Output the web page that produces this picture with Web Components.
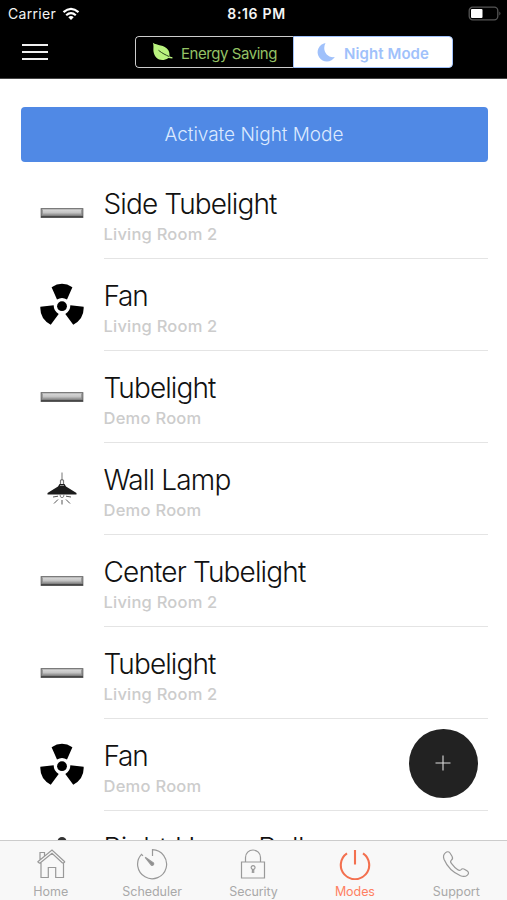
<!DOCTYPE html>
<html lang="en">
<head>
<meta charset="utf-8">
<title>Modes</title>
<style>
html,body{margin:0;height:100%;overflow:hidden;background:#fff;font-family:Inter,"Liberation Sans",sans-serif}
</style>
</head>
<body>
<modes-app></modes-app>
<script>
const svg = (w, h, body) => `<svg width="${w}" height="${h}" viewBox="0 0 ${w} ${h}" fill="none">${body}</svg>`;
const ICONS = {
  tube: svg(44, 44, `<defs><linearGradient id="t" x2="0" y2="1"><stop stop-color="#ddd"/><stop offset=".45" stop-color="#c4c4c4"/><stop offset=".75" stop-color="#8b8b8b"/><stop offset="1" stop-color="#555"/></linearGradient></defs><rect x="1.2" y="17.7" width="41.6" height="8.7" fill="url(#t)" stroke="#666" stroke-width="1.1"/><path d="M1 25.8h42" stroke="#484848" stroke-width="1.5"/><path d="M2.4 18.5v5M41.6 18.5v5" stroke="#888" stroke-width=".8"/>`),
  fan: svg(44, 44, `<g fill="#000"><circle cx="22" cy="23.2" r="4.9"/><path d="M11.6 4.200Q22-2.600 32.400 4.200L27 16.500Q22 13.500 17 16.500Z"/><path d="M11.6 4.200Q22-2.600 32.400 4.200L27 16.500Q22 13.500 17 16.500Z" transform="rotate(120 22 23.2)"/><path d="M11.6 4.200Q22-2.600 32.400 4.200L27 16.500Q22 13.500 17 16.500Z" transform="rotate(240 22 23.2)"/></g>`),
  lamp: svg(44, 44, `<path d="M22 5.500v8" stroke="#777" stroke-width="1"/><path d="M20.500 17v-3.500q1.500-2 3 0V17" stroke="#777"/><path d="M19.500 17h5l1.500 2.500L36.500 26v1.500h-29V26L18 19.500Z" fill="#1c1c1c"/><path d="M20 18.500h4" stroke="#aaa" stroke-width=".8"/><path d="M20 27.500q0 3.200 2 3.200t2-3.200" stroke="#777" stroke-width=".9"/><path d="M13 30l5-.8M26 29.200l5 .8M14 36.500l4-4M30 36.500l-4-4M22 33v4.500" stroke="#555" stroke-width="1"/>`),
  bulb: svg(44, 44, `<circle cx="22" cy="6.500" r="4.500" fill="#333"/>`),
  home: svg(30, 32, `<path d="M5 14.500V29.500H12.300V19.500H19.700V29.500H27.500V14.500M1.500 14 16 2 29 14M3.800 15.300 16 5.300 26.800 15.300M1.500 14l2.300 1.300M29 14l-2.200 1.300M4 11.500V4.500H8.500V8"/>`),
  clock: svg(32, 32, `<path d="M16.500 8V1.700A14.500 14.500 0 1 1 5.500 6.300L7 7.800"/><path d="M9.200 9.300 17.400 14.900A1.500 1.500 0 0 1 15.300 17Z" fill="#8d8d8d"/>`),
  lock: svg(28, 32, `<path d="M2.500 14h23v16h-23ZM6.500 14V9.500a7.500 7.500 0 0 1 15 0V14M13.300 25l.2-3.600a1.900 1.900 0 1 1 1.200 0L14.700 25"/>`),
  power: svg(32, 32, `<path d="M16 2v14.500M8 5.300A14.200 14.200 0 1 0 24 5.300" stroke-width="2.100"/>`),
  phone: svg(32, 32, `<path d="M5.300 4.900C7 3.400 8.700 3.300 10 5l2 3.200c1.100 1.800.7 3-.8 4.200-1 .8-.8 1.700.2 3 2 2.700 3.800 4.700 6.400 6.400 1.300.9 2.100.9 3 0 1.200-1.300 2.300-1.500 4-.4l2.500 1.700c1.600 1.200 1.600 2.700.1 4-1.700 1.500-4.200 1.700-6.900.7C12.900 24.500 7.100 18.600 4 11.300 3 8.500 3.400 6.500 5.300 4.900Z"/>`),
  leaf: svg(22, 20, `<path d="M.8.8C5 3.800 12.500 2.500 16.200 8c1.300 2 1.400 4.400 1.200 6.400l3.100.9-.1 1.200-4-.5C9.500 20.500 2.500 17 1.500 9.500 1.100 6.300 2 3.500.8.8Z" fill="#b9f27e"/><path d="M6.500 8.300C10.500 11.500 13.500 12.800 17 14.500" stroke="#29421b" stroke-width="1"/>`),
  moon: svg(20, 20, `<path d="M8.500 1A9.300 9.300 0 1 0 17.800 15.100C10 16.400 4.700 8.500 8.500 1Z" fill="#a0c1fb"/>`),
  wifi: svg(18, 14, `<path d="M1.500 5.200q7.500-6.600 15 0M4.200 8.200q4.800-4.300 9.600 0" stroke="#fff" stroke-width="2.200"/><path d="m9 13-2.700-2.800q2.700-2.300 5.400 0Z" fill="#fff"/>`),
  battery: svg(34, 16, `<rect x="1.200" y="1.200" width="28.600" height="12.600" rx="3.500" stroke="#555" stroke-width="1.300"/><rect x="3" y="3" width="11.500" height="9" rx="1" fill="#fff"/><path d="M31.300 5.500q2.400 2 0 4Z" fill="#555"/>`)
};
const define = (name, css, html, after) => customElements.define(name, class extends HTMLElement {
  connectedCallback() {
    if (this.shadowRoot) return;
    const t = document.createElement('template');
    t.innerHTML = `<style>*{box-sizing:border-box}svg{display:block}${css}</style>${typeof html === 'function' ? html(this) : html}`;
    this.attachShadow({mode: 'open'}).append(t.content.cloneNode(true));
    if (after) after(this);
  }
});

/* One line of text whose tracking is adjusted to the width in its "w" attribute. */
define('fit-text', ':host{display:block;white-space:nowrap}span{display:inline-block}',
  el => `<span>${el.getAttribute('text')}</span>`, el => {
    const s = el.shadowRoot.querySelector('span');
    const n = el.getAttribute('text').length;
    const gap = (+el.getAttribute('w') - s.getBoundingClientRect().width) / n;
    s.style.letterSpacing = gap.toFixed(3) + 'px';
  });
define('app-icon', ':host{display:block;flex:none}svg{stroke-width:1.200}', el => ICONS[el.getAttribute('name')]);

define('status-bar', `:host{display:grid;grid-template-columns:1fr auto 1fr;height:27px;align-items:center;padding:0 5px 0 8px;color:#f4f4f4;font-size:14px}
.l{display:flex;gap:6px;align-items:center}.r{justify-self:end}.c{font-weight:600;font-size:14px;padding-left:3px}`,
  `<div class="l"><fit-text text="Carrier" w="48"></fit-text><app-icon name="wifi"></app-icon></div><fit-text class="c" text="8:16 PM" w="58.500"></fit-text><app-icon class="r" name="battery"></app-icon>`);

define('nav-bar', `:host{display:flex;height:52px;padding:9px 54px 0 22px;justify-content:space-between;align-items:flex-start}
.menu{display:grid;gap:4.500px;padding-top:8px}.menu i{width:26px;height:2.300px;background:#f0f0f0}
.seg{display:grid;grid-template-columns:158px 160px;width:318px;height:32px;border-radius:4px;overflow:hidden;font-size:15px}
.seg div{display:flex;align-items:center}
.a{border:1px solid #ccc;border-right:0;border-radius:4px 0 0 4px;color:#94c265;padding-left:16px;gap:7px}
.b{background:#fff;border:1px solid #a0c1fb;border-radius:0 4px 4px 0;color:#a0c1fb;font-weight:600;padding-left:23px;gap:7px}
.a fit-text,.b fit-text{padding-top:2px}`,
  `<div class="menu"><i></i><i></i><i></i></div><div class="seg"><div class="a"><app-icon name="leaf"></app-icon><fit-text text="Energy Saving" w="96"></fit-text></div><div class="b"><app-icon name="moon"></app-icon><fit-text text="Night Mode" w="85"></fit-text></div></div>`);

define('action-button', `:host{display:flex;height:54.500px;margin:28.300px 19.500px 0 20.500px;border-radius:4px;background:#5089e5;align-items:center;justify-content:center;color:#dce9ff;font-size:19px;font-weight:300}`,
  `<fit-text text="Activate Night Mode" w="179"></fit-text>`);

define('device-row', `:host{display:flex;height:92px;padding:0 19px 0 40px;gap:20px}
app-icon{margin-top:24px}.t{flex:1;border-bottom:1px solid #e4e4e4;padding-top:19px}
.n{font-size:28px;line-height:36px;font-weight:300;color:#111;margin-left:-.5px}.s{font-size:16.500px;line-height:20px;font-weight:500;color:#ccc;margin-top:2px;margin-left:-.5px}`,
  el => `<app-icon name="${el.getAttribute('icon')}"></app-icon><div class="t"><fit-text class="n" text="${el.getAttribute('name')}" w="${el.getAttribute('w')}"></fit-text><fit-text class="s" text="${el.getAttribute('room')}" w="${el.getAttribute('room')[0] === 'L' ? 114 : 98}"></fit-text></div>`);

define('tab-item', `:host{display:flex;flex-direction:column;align-items:center;padding-top:7px;gap:2px;color:#a9a9a9;font-size:12.500px}
:host([active]){color:#ff8062}app-icon{height:32px;stroke:#999}:host([active]) app-icon{stroke:#f3704f}
fit-text{line-height:19px}`,
  el => `<app-icon name="${el.getAttribute('icon')}"></app-icon><fit-text text="${el.getAttribute('label')}" w="${el.getAttribute('w')}"></fit-text>`);

define('modes-app', `:host{display:grid;position:relative;height:900px;width:507px;grid-template-rows:79px 761px 60px;background:#fff}
header{background:#000;border-bottom:1px solid #444}main{overflow:hidden}.rows{margin-top:5.200px}
nav{display:grid;grid-template-columns:repeat(5,1fr);background:#f8f8f8;border-top:1px solid #ccc}
.add{position:absolute;left:409px;top:729px;width:68.500px;height:68.500px;border-radius:50%;background:#222;display:grid;place-items:center}`,
  `<header><status-bar></status-bar><nav-bar></nav-bar></header><main><action-button></action-button><div class="rows">
<device-row icon="tube" name="Side Tubelight" room="Living Room 2" w="173"></device-row>
<device-row icon="fan" name="Fan" room="Living Room 2" w="44"></device-row>
<device-row icon="tube" name="Tubelight" room="Demo Room" w="112"></device-row>
<device-row icon="lamp" name="Wall Lamp" room="Demo Room" w="127"></device-row>
<device-row icon="tube" name="Center Tubelight" room="Living Room 2" w="202"></device-row>
<device-row icon="tube" name="Tubelight" room="Living Room 2" w="112"></device-row>
<device-row icon="fan" name="Fan" room="Demo Room" w="44"></device-row>
<device-row icon="bulb" name="Right Home Bulb" room="Demo Room" w="211"></device-row>
</div></main><nav>
<tab-item icon="home" label="Home" w="35"></tab-item>
<tab-item icon="clock" label="Scheduler" w="59.500"></tab-item>
<tab-item icon="lock" label="Security" w="48.500"></tab-item>
<tab-item icon="power" label="Modes" w="40" active></tab-item>
<tab-item icon="phone" label="Support" w="47"></tab-item>
</nav><div class="add">${svg(16, 16, '<path d="M8 .5v15M.5 8h15" stroke="#ddd" stroke-width="1.1"/>')}</div>`);
</script>
</body>
</html>
